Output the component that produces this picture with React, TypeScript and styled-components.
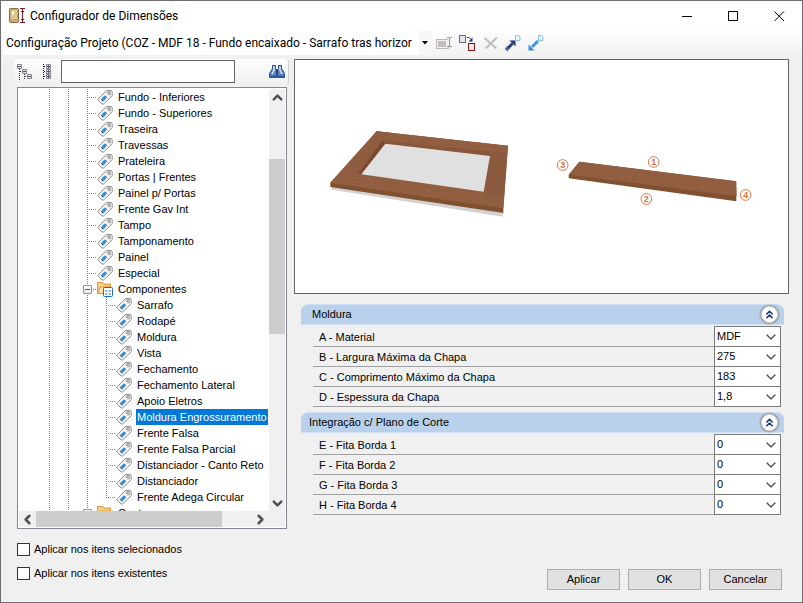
import React, { useState } from "react";
import styled, { createGlobalStyle } from "styled-components";
import { ChevronDown, ChevronLeft, ChevronRight, ChevronUp, ChevronsUp } from "lucide-react";

const GlobalStyle = createGlobalStyle`
  *, *::before, *::after { box-sizing: border-box; }
  body { margin: 0; background: #f0f0f0; }
  button, input, select { font: inherit; color: inherit; }
`;

const uiFont = `"Liberation Sans", Arial, sans-serif`;
const captionFont = `Roboto, "Segoe UI", sans-serif`;

const Window = styled.main`
  display: flex;
  flex-direction: column;
  height: 100vh;
  border: 1px solid #6e6e6e;
  background: #f0f0f0;
  color: #000;
  font: 11px/16px ${uiFont};
`;

/* ---- Title bar ---- */

const TitleBar = styled.header`
  display: flex;
  align-items: center;
  height: 30px;
  padding-left: 8px;
  background: #fff;
`;

const Title = styled.h1`
  flex: 1;
  margin: 0 0 0 5px;
  font: 400 12px/16px ${captionFont};
`;

const CaptionButton = styled.button`
  display: grid;
  place-items: center;
  width: 46px;
  height: 30px;
  padding: 0;
  border: 0;
  background: transparent;
  &:hover { background: #e5e5e5; }
`;

/* ---- Toolbar ---- */

const ToolBar = styled.div`
  display: flex;
  align-items: flex-start;
  gap: 4px;
  height: 28px;
  padding-left: 2px;
  background: linear-gradient(#fdfdfd, #f0f0f0);
`;

const ProjectPicker = styled.div`
  display: grid;
  grid-template-columns: 1fr 12px;
  width: 428px;
  height: 24px;
  background: #fff;
`;

const ProjectSelect = styled.select`
  grid-area: 1 / 1 / 2 / 3;
  appearance: none;
  min-width: 0;
  padding: 0 12px 0 3px;
  border: 0;
  background: transparent;
  font: 12px/24px ${captionFont};
`;

const PickerArrow = styled.span`
  grid-area: 1 / 2;
  display: grid;
  place-items: center;
  background: #f7f7f7;
  pointer-events: none;
`;

const ToolButton = styled.button`
  display: grid;
  place-items: center;
  width: 19px;
  height: 24px;
  padding: 0;
  border: 0;
  background: transparent;
`;

/* ---- Body ---- */

const Body = styled.div`
  display: grid;
  grid-template-columns: 275px minmax(0, 1fr);
  gap: 5px;
  flex: 1;
  min-height: 0;
  padding: 0 13px;
`;

const LeftColumn = styled.section`
  display: flex;
  flex-direction: column;
  gap: 3px;
  min-height: 0;
`;

const SearchBar = styled.div`
  display: flex;
  align-items: center;
  height: 25px;
  border-right: 1px solid #d0d0d0;
  border-radius: 3px;
  background: linear-gradient(#fdfdfd, #f0f0f0);
`;

const IconButton = styled.button`
  display: grid;
  place-items: center;
  width: 22px;
  height: 22px;
  padding: 0;
  border: 0;
  background: transparent;
`;

const SearchInput = styled.input`
  width: 174px;
  height: 23px;
  margin: 0 auto 0 3px;
  padding: 0 4px;
  border: 1px solid #646464;
  background: #fff;
`;

const TreeFrame = styled.div`
  display: grid;
  grid-template: minmax(0, 1fr) 16px / minmax(0, 1fr) 16px;
  flex: 1;
  min-height: 0;
  margin: 0 2px 0 3px;
  padding: 1px;
  border: 1px solid #828790;
  background: #fff;
`;

const Tree = styled.ul`
  overflow: hidden;
  margin: 0;
  padding: 0 0 0 21px;
  list-style: none;
`;

const TreeRow = styled.li`
  display: flex;
  height: 16px;
`;

const Guide = styled.span<{ $branch?: boolean; $last?: boolean }>`
  display: grid;
  place-items: center;
  flex: none;
  width: 19px;
  background-image: repeating-linear-gradient(#808080 0 1px, transparent 1px 2px),
    repeating-linear-gradient(to right, #808080 0 1px, transparent 1px 2px);
  background-repeat: no-repeat;
  background-size: 1px ${(p) => (p.$last ? "9px" : "100%")}, ${(p) => (p.$branch ? "10px" : "0")} 1px;
  background-position: 9px 0, 9px 8px;
`;

const Expander = styled.button`
  display: grid;
  place-items: center;
  width: 9px;
  height: 9px;
  padding: 0;
  border: 1px solid #919191;
  border-radius: 1px;
  background: linear-gradient(#fff, #e8e8e8);
  &::after { content: ""; width: 5px; height: 1px; background: #3f5f9f; }
`;

const NodeLabel = styled.button<{ $selected: boolean }>`
  flex: none;
  margin-left: 4px;
  padding: 0 1px;
  border: 0;
  background: ${(p) => (p.$selected ? "#0078d7" : "transparent")};
  color: ${(p) => (p.$selected ? "#fff" : "#000")};
  line-height: 16px;
  white-space: nowrap;
`;

const ScrollBar = styled.div<{ $horizontal?: boolean }>`
  display: flex;
  flex-direction: ${(p) => (p.$horizontal ? "row" : "column")};
  background: #f0f0f0;
  color: #505050;
`;

const ScrollArrow = styled.button`
  display: grid;
  place-items: center;
  flex: none;
  width: 17px;
  height: 16px;
  margin: 0;
  padding: 0;
  border: 0;
  background: transparent;
`;

const ScrollTrack = styled.div<{ $before: number; $thumb: number; $after: number; $horizontal?: boolean }>`
  display: grid;
  flex: 1;
  ${(p) => (p.$horizontal ? "grid-template-columns" : "grid-template-rows")}:
    ${(p) => `${p.$before}fr ${p.$thumb}fr ${p.$after}fr`};
`;

const ScrollThumb = styled.span<{ $horizontal?: boolean }>`
  ${(p) => (p.$horizontal ? "grid-column" : "grid-row")}: 2;
  background: #cdcdcd;
`;

/* ---- Right side ---- */

const RightColumn = styled.section`
  display: flex;
  flex-direction: column;
  min-height: 0;
`;

const Preview = styled.figure`
  height: 235px;
  margin: 0 0 10px;
  border: 1px solid #646464;
  background: #fff;
  svg { display: block; width: 100%; height: 100%; }
`;

const Group = styled.section`
  margin: 0 5px 5px 7px;
`;

const GroupHeader = styled.div<{ $indent: number }>`
  display: flex;
  align-items: center;
  justify-content: space-between;
  height: 21px;
  padding: 0 6px 0 ${(p) => p.$indent}px;
  border: 1px solid #cfe0f2;
  border-width: 1px 0;
  border-radius: 7px 7px 0 0;
  background: #b9d1ea;
`;

const GroupTitle = styled.h2`
  margin: 0;
  padding-bottom: 2px;
  font: inherit;
`;

const CollapseButton = styled.button`
  display: grid;
  place-items: center;
  width: 17px;
  height: 17px;
  padding: 0;
  border: 1px solid #d8d8d8;
  border-radius: 50%;
  background: #fff;
  color: #1c3a7c;
  box-shadow: 0 0 2px 1px #8c8c8c;
`;

const Fields = styled.div`
  margin: 1px 3px 0 12px;
`;

const FieldRow = styled.div`
  display: grid;
  grid-template-columns: minmax(0, 1fr) 67px;
  height: 20px;
  &:first-child { height: 21px; }
  &:first-child > label { padding-top: 3px; }
  &:first-child > span { border-top: 1px solid #7a7a7a; }
`;

const FieldLabel = styled.label`
  padding: 2px 0 0 6px;
  border-bottom: 1px solid #a0a0a0;
`;

const FieldValue = styled.span`
  display: grid;
  grid-template-columns: minmax(0, 1fr) 17px;
  align-items: center;
  border: 1px solid #7a7a7a;
  border-top: 0;
  background: #fff;
  svg { grid-area: 1 / 2; color: #505050; pointer-events: none; }
`;

const FieldSelect = styled.select`
  grid-area: 1 / 1 / 2 / 3;
  appearance: none;
  height: 19px;
  padding: 0 17px 1px 2px;
  border: 0;
  background: transparent;
  line-height: 18px;
`;

/* ---- Footer ---- */

const Footer = styled.footer`
  display: flex;
  justify-content: space-between;
  padding: 14px 20px 12px 16px;
`;

const Checks = styled.div`
  display: flex;
  flex-direction: column;
  gap: 11px;
  padding-bottom: 10px;
`;

const CheckLabel = styled.label`
  display: flex;
  align-items: center;
  gap: 4px;
  height: 13px;
  line-height: 13px;
`;

const CheckBox = styled.input`
  appearance: none;
  width: 13px;
  height: 13px;
  margin: 0;
  border: 1px solid #333;
  background: #fff;
  &:checked { box-shadow: inset 0 0 0 2px #fff; background: #333; }
`;

const Actions = styled.div`
  display: flex;
  align-items: flex-end;
  gap: 8px;
`;

const ActionButton = styled.button`
  width: 73px;
  height: 21px;
  padding: 0 0 1px;
  border: 1px solid #adadad;
  background: #e1e1e1;
`;

/* ---- Drawings ---- */

const AppIcon = () => (
  <svg width="16" height="16" viewBox="0 0 16 16">
    <rect x=".5" y=".5" width="9" height="14" rx="1" fill="#c9a877" stroke="#8a6d48" />
    <rect x="2" y="2" width="6" height="9" fill="#d9c98f" />
    <path d="M3 8V4l2-1v3z" fill="#fff8d8" />
    <path d="M11 .5h5M11 14.5h5M13.5 1v13M12 3.5h3M12 11.5h3" stroke="#7d1c1c" fill="none" />
  </svg>
);

const RenameIcon = () => (
  <svg width="17" height="16" viewBox="0 0 17 16" fill="none">
    <rect x=".5" y="4.5" width="12" height="9" fill="#f2f2f2" stroke="#b8b8b8" />
    <rect x="2" y="6" width="8" height="6" fill="#c3bdbb" />
    <path d="M13.5 3v8" stroke="#f4f4f4" strokeWidth="3" />
    <path d="M11 2.500h2l.5.5.5-.5h2M13.5 3v8M11 11.5h5" stroke="#8f9a9a" />
  </svg>
);

const CopyIcon = () => (
  <svg width="17" height="17" viewBox="0 0 17 17" fill="none">
    <rect x=".5" y=".5" width="6" height="7" fill="#e3e5ec" stroke="#6d6d76" />
    <path d="M8 2.5h2l2.500 2.500" stroke="#16407c" />
    <path d="M13.500 2.500v4h-4z" fill="#16407c" />
    <rect x="9.500" y="8.500" width="6" height="7" fill="#e6e8ea" stroke="#8a1414" />
  </svg>
);

const DeleteIcon = () => (
  <svg width="16" height="16" viewBox="0 0 16 16" fill="none">
    <path d="M1.5 3l12 10.500M14 2.500L2.500 13.500" stroke="#c0c0c0" strokeWidth="2.200" />
  </svg>
);

const PageMark = () => <path d="M10.500.5h3l1.500 1.500v3.500h-4.500z" fill="#e6f3fb" stroke="#8fc1e4" />;

const ExportIcon = () => (
  <svg width="17" height="17" viewBox="0 0 17 17" fill="none">
    <path d="M1 15l3-3" stroke="#4a63a8" strokeWidth="3.500" />
    <path d="M3.500 12.500l4-4" stroke="#27407f" strokeWidth="3" />
    <path d="M4.500 5.500h6V11.500z" fill="#22386f" />
    <PageMark />
  </svg>
);

const ImportIcon = () => (
  <svg width="17" height="17" viewBox="0 0 17 17" fill="none">
    <path d="M4 12l6-6" stroke="#4695dc" strokeWidth="3" />
    <path d="M.5 9.500V15.500H6.500z" fill="#3a8ad4" />
    <PageMark />
  </svg>
);

const CollapseTreeIcon = () => (
  <svg width="16" height="16" viewBox="0 0 16 16" fill="none" stroke="#85859a">
    <path d="M2.500 5v11M7.500 10v6" stroke="#333" strokeDasharray="1 1" />
    <path d="M3 7.500h2M8 12.500h2" stroke="#333" strokeDasharray="1 1" />
    <path d="M.5.5h4v4h-4zM5.500 5.500h4v4h-4zM10.500 10.500h4v4h-4z" fill="#e7e9f2" />
    <path d="M1 2.500h3M6 7.500h3M11 12.500h3" stroke="#555" />
  </svg>
);

const ExpandTreeIcon = () => (
  <svg width="16" height="16" viewBox="0 0 16 16" fill="none" stroke="#85859a">
    <path d="M4.500 0v16" stroke="#111" strokeDasharray="1 1" />
    <path d="M5 2.500h2M5 7.500h2M5 12.500h2" stroke="#333" strokeDasharray="1 1" />
    <path d="M7.500.5h4v4h-4zM7.500 5.500h4v4h-4zM7.500 10.500h4v4h-4z" fill="#e7e9f2" />
    <path d="M8 2.500h3M8 7.500h3M8 12.500h3M9.500 1v3M9.500 6v3M9.500 11v3" stroke="#555" />
  </svg>
);

const BinocularsIcon = () => (
  <svg width="16" height="16" viewBox="0 0 16 16">
    <path d="M3.500 1.500h3v3l1 1v8h-7v-4l3-5zM9.500 1.500h3v3l3 5v4h-7v-8l1-1z" fill="#5f87bd" stroke="#2a4f8a" />
    <rect x="7" y="5" width="2" height="4" fill="#1f437c" />
    <path d="M5 2v4l-2 4M11 2v4l2 4" stroke="#dbe8f6" strokeWidth="1.500" fill="none" />
    <path d="M1 12.500h6M9 12.500h6" stroke="#2a5fae" strokeWidth="2" />
  </svg>
);

const TagIcon = () => (
  <svg width="16" height="16" viewBox="0 0 16 16">
    <path d="M.8 10.500L9.500 1.500h4.500l1.200 1v4.200L6.500 15H5z" fill="#fafafa" stroke="#8d8d8d" strokeLinejoin="round" />
    <path d="M9.500 2h4.500v4.500l-1.500 1.300L8.500 4z" fill="#dadada" />
    <circle cx="12.200" cy="4" r="1.200" fill="#fff" stroke="#777" strokeWidth=".9" />
    <path d="M8 6.300l2.300 2-4.400 4.500-2.300-2.200z" fill="#2b86cf" />
    <path d="M7.400 7.600l1.600 1.500M5.600 9.400l1.600 1.500" stroke="#7ab8ec" strokeWidth=".7" />
  </svg>
);

const FolderIcon = () => (
  <svg width="16" height="16" viewBox="0 0 16 16">
    <path d="M.5 12.500V1.500h5L7 3h6.500v9.500z" fill="#f7d08a" stroke="#d8953a" />
    <path d="M.8 12.500L3 6h11v6.500z" fill="#fce3b0" stroke="#d8953a" />
    <rect x="6.500" y="6.500" width="9" height="9" rx="1" fill="#fff" stroke="#1d6fb8" />
    <path d="M8 9h2.500v2H8zM11.500 9H14v2h-2.500zM8 12h2.500v2H8zM11.500 12H14v2h-2.500z" fill="#8fc0e8" />
  </svg>
);

const marks = [
  { n: 1, x: 341, y: 66 },
  { n: 2, x: 319, y: 177 },
  { n: 3, x: 68, y: 75 },
  { n: 4, x: 617, y: 165 },
];

const NumberText = styled.text`
  font: 700 27px ${uiFont};
  fill: #d9703c;
  text-anchor: middle;
`;

const PanelDrawing = () => (
  <svg viewBox="0 0 1479 699" role="img" aria-label="Moldura">
    <defs>
      <pattern id="grain" width="90" height="20" patternUnits="userSpaceOnUse" patternTransform="rotate(5)">
        <rect width="90" height="20" fill="#925f42" />
        <path d="M0 4h50M30 9h60M0 14h30M55 17h35" stroke="#8b583c" strokeWidth="2" />
      </pattern>
      <pattern id="grainSide" width="20" height="70" patternUnits="userSpaceOnUse" patternTransform="rotate(35)">
        <rect width="20" height="70" fill="#905d41" />
        <path d="M5 0v40M12 25v45M17 0v25" stroke="#89563b" strokeWidth="2" />
      </pattern>
    </defs>
    <g transform="translate(15 120)">
      <path d="M95 258L608 338V350L95 269z" fill="#d2d2d4" />
      <path d="M91 248L230 94L624 137L610 325V339L91 261z" fill="#80502f" />
      <path d="M91 248L230 94L624 137L610 325z" fill="url(#grain)" />
      <path d="M230 94L133 217L184 223L256 131L270 98z" fill="url(#grainSide)" />
      <path d="M570 168L551 275L554 284L610 290L621 158L570 153z" fill="#8c5a3e" />
      <path d="M248 121L256 131L184 223L174 222z" fill="#7c482f" />
      <path d="M248 121L570 155V168L256 131z" fill="#8a563b" />
      <path d="M256 131L570 168L551 275L184 223z" fill="#e0e0e0" />
    </g>
    <g transform="translate(735 240)">
      <path d="M86 105L118 65L589 124V184L86 115z" fill="#80502f" />
      <path d="M86 104L118 65L588 124L590 168z" fill="url(#grain)" />
      {marks.map((m) => (
        <g key={m.n}>
          <circle cx={m.x} cy={m.y} r="16" fill="none" stroke="#dc7a48" strokeWidth="3" />
          <NumberText x={m.x} y={m.y + 9}>{m.n}</NumberText>
        </g>
      ))}
    </g>
  </svg>
);

/* ---- Data ---- */

const upperNodes = [
  "Fundo - Inferiores", "Fundo - Superiores", "Traseira", "Travessas", "Prateleira", "Portas | Frentes",
  "Painel p/ Portas", "Frente Gav Int", "Tampo", "Tamponamento", "Painel", "Especial",
];
const componentNodes = [
  "Sarrafo", "Rodapé", "Moldura", "Vista", "Fechamento", "Fechamento Lateral", "Apoio Eletros",
  "Moldura Engrossuramento", "Frente Falsa", "Frente Falsa Parcial", "Distanciador - Canto Reto",
  "Distanciador", "Frente Adega Circular",
];

type GroupData = { title: string; indent: number; fields: [string, string][] };
const groups: GroupData[] = [
  {
    title: "Moldura",
    indent: 11,
    fields: [
      ["A - Material", "MDF"],
      ["B - Largura Máxima da Chapa", "275"],
      ["C - Comprimento Máximo da Chapa", "183"],
      ["D - Espessura da Chapa", "1,8"],
    ],
  },
  {
    title: "Integração c/ Plano de Corte",
    indent: 8,
    fields: [
      ["E - Fita Borda 1", "0"],
      ["F - Fita Borda 2", "0"],
      ["G - Fita Borda 3", "0"],
      ["H - Fita Borda 4", "0"],
    ],
  },
];

type NodeProps = {
  label: string;
  level: number;
  folder?: boolean;
  last?: boolean;
  selected: string;
  onSelect: (label: string) => void;
};

function TreeNode({ label, level, folder, last, selected, onSelect }: NodeProps) {
  return (
    <TreeRow role="treeitem" aria-level={level} aria-selected={selected === label}>
      {Array.from({ length: level - 1 }, (_, i) => <Guide key={i} />)}
      <Guide $branch $last={last}>{folder && <Expander aria-label={`Recolher ${label}`} />}</Guide>
      {folder ? <FolderIcon /> : <TagIcon />}
      <NodeLabel $selected={selected === label} onClick={() => onSelect(label)}>{label}</NodeLabel>
    </TreeRow>
  );
}

export default function App() {
  const [selected, setSelected] = useState("Moldura Engrossuramento");
  const [closed, setClosed] = useState<string[]>([]);
  const toggle = (t: string) => setClosed((c) => (c.includes(t) ? c.filter((x) => x !== t) : [...c, t]));
  const node = { selected, onSelect: setSelected };

  return (
    <>
      <GlobalStyle />
      <Window>
        <TitleBar>
          <AppIcon />
          <Title>Configurador de Dimensões</Title>
          <CaptionButton aria-label="Minimizar">
            <svg width="11" height="11"><path d="M0 5.500h10" stroke="#000" /></svg>
          </CaptionButton>
          <CaptionButton aria-label="Maximizar">
            <svg width="11" height="11"><path d="M.5.5h9v9h-9z" stroke="#000" fill="none" /></svg>
          </CaptionButton>
          <CaptionButton aria-label="Fechar">
            <svg width="11" height="11"><path d="M.5.5l9.500 9.500M10 .5l-9.500 9.500" stroke="#000" /></svg>
          </CaptionButton>
        </TitleBar>

        <ToolBar>
          <ProjectPicker>
            <ProjectSelect aria-label="Configuração Projeto">
              <option>Configuração Projeto (COZ - MDF 18 - Fundo encaixado - Sarrafo tras horizor</option>
            </ProjectSelect>
            <PickerArrow>
              <svg width="6" height="4"><path d="M0 0h6L3 3.500z" /></svg>
            </PickerArrow>
          </ProjectPicker>
          <ToolButton aria-label="Renomear"><RenameIcon /></ToolButton>
          <ToolButton aria-label="Copiar"><CopyIcon /></ToolButton>
          <ToolButton aria-label="Excluir"><DeleteIcon /></ToolButton>
          <ToolButton aria-label="Exportar"><ExportIcon /></ToolButton>
          <ToolButton aria-label="Importar"><ImportIcon /></ToolButton>
        </ToolBar>

        <Body>
          <LeftColumn>
            <SearchBar>
              <IconButton aria-label="Recolher tudo"><CollapseTreeIcon /></IconButton>
              <IconButton aria-label="Expandir tudo"><ExpandTreeIcon /></IconButton>
              <SearchInput aria-label="Procurar" />
              <IconButton aria-label="Localizar"><BinocularsIcon /></IconButton>
            </SearchBar>
            <TreeFrame>
              <Tree role="tree">
                {upperNodes.map((n) => <TreeNode key={n} label={n} level={3} {...node} />)}
                <TreeNode label="Componentes" level={3} folder {...node} />
                {componentNodes.map((n, i) => (
                  <TreeNode key={n} label={n} level={4} last={i === componentNodes.length - 1} {...node} />
                ))}
                <TreeNode label="Cantos" level={3} folder {...node} />
              </Tree>
              <ScrollBar>
                <ScrollArrow aria-label="Para cima"><ChevronUp size={15} strokeWidth={4} /></ScrollArrow>
                <ScrollTrack $before={54} $thumb={174} $after={161}><ScrollThumb /></ScrollTrack>
                <ScrollArrow aria-label="Para baixo"><ChevronDown size={15} strokeWidth={4} /></ScrollArrow>
              </ScrollBar>
              <ScrollBar $horizontal>
                <ScrollArrow aria-label="Para a esquerda"><ChevronLeft size={15} strokeWidth={4} /></ScrollArrow>
                <ScrollTrack $horizontal $before={0} $thumb={186} $after={30}><ScrollThumb $horizontal /></ScrollTrack>
                <ScrollArrow aria-label="Para a direita"><ChevronRight size={15} strokeWidth={4} /></ScrollArrow>
              </ScrollBar>
              <ScrollBar />
            </TreeFrame>
          </LeftColumn>

          <RightColumn>
            <Preview><PanelDrawing /></Preview>
            {groups.map((g) => (
              <Group key={g.title}>
                <GroupHeader $indent={g.indent}>
                  <GroupTitle>{g.title}</GroupTitle>
                  <CollapseButton aria-label={`Recolher ${g.title}`} onClick={() => toggle(g.title)}>
                    <ChevronsUp size={13} strokeWidth={3} />
                  </CollapseButton>
                </GroupHeader>
                {!closed.includes(g.title) && (
                  <Fields>
                    {g.fields.map(([label, value]) => (
                      <FieldRow key={label}>
                        <FieldLabel htmlFor={label[0]}>{label}</FieldLabel>
                        <FieldValue>
                          <FieldSelect id={label[0]}><option>{value}</option></FieldSelect>
                          <ChevronDown size={16} strokeWidth={2} />
                        </FieldValue>
                      </FieldRow>
                    ))}
                  </Fields>
                )}
              </Group>
            ))}
          </RightColumn>
        </Body>

        <Footer>
          <Checks>
            <CheckLabel><CheckBox type="checkbox" />Aplicar nos itens selecionados</CheckLabel>
            <CheckLabel><CheckBox type="checkbox" />Aplicar nos itens existentes</CheckLabel>
          </Checks>
          <Actions>
            <ActionButton>Aplicar</ActionButton>
            <ActionButton>OK</ActionButton>
            <ActionButton>Cancelar</ActionButton>
          </Actions>
        </Footer>
      </Window>
    </>
  );
}
